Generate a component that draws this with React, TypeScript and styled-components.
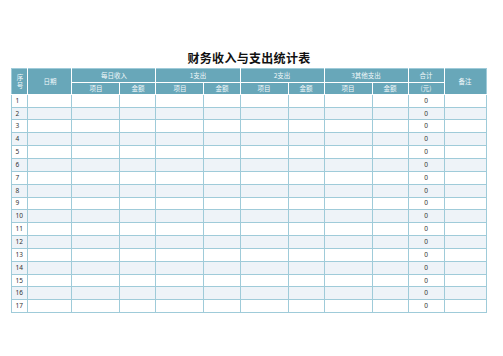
import React from "react";
import styled, { createGlobalStyle } from "styled-components";

const Global = createGlobalStyle`
  html, body { margin: 0; padding: 0; background: #ffffff; }
  body { font-family: "Noto Sans", "Noto Sans CJK SC", sans-serif; }
`;

const Page = styled.div`
  width: 503px;
  height: 356px;
  padding: 52px 0 0 12px;
  box-sizing: border-box;
`;

const Sheet = styled.div`
  width: 474px;
  display: flex;
  flex-direction: column;
  align-items: center;
  gap: 4px;
`;

const Title = styled.h1`
  margin: 0;
  font-family: "Noto Sans CJK SC", sans-serif;
  font-size: 12px;
  line-height: 12px;
  font-weight: 700;
  color: #111;
  letter-spacing: 0.3px;
`;

const Table = styled.table`
  width: 474px;
  table-layout: fixed;
  border-collapse: collapse;
  border: 1px solid #9fcbd9;
`;

const HeadRow = styled.tr<{ $h: number }>`
  height: ${(p) => p.$h}px;
`;

const HeadCell = styled.th`
  background: #68a7b9;
  color: #f2f8fa;
  font-family: "Noto Sans CJK SC", sans-serif;
  font-weight: 400;
  font-size: 6.5px;
  line-height: 8px;
  text-align: center;
  vertical-align: middle;
  padding: 0;
  border: 1px solid #ffffff;
  &:first-child { border-left-color: #9fcbd9; }
  &:last-child { border-right-color: #9fcbd9; }
`;

const HeadTop = styled.tr`
  height: 13.5px;
  & > th { border-top-color: #9fcbd9; }
`;

const SeqHead = styled(HeadCell)`
  padding: 0 4px;
  line-height: 8.5px;
  word-break: break-all;
`;

const BodyRow = styled.tr<{ $striped: boolean }>`
  height: 12.85px;
  background: ${(p) => (p.$striped ? "#eef3f8" : "#ffffff")};
`;

const Cell = styled.td<{ $align?: string }>`
  border: 1px solid #9fcbd9;
  padding: 0 0 0 3px;
  font-family: "Noto Sans", sans-serif;
  font-size: 6.5px;
  line-height: 8px;
  color: #333;
  text-align: ${(p) => p.$align || "left"};
  vertical-align: middle;
`;

const TotalCell = styled(Cell)`
  padding: 0;
  text-align: center;
`;

const widths = [16, 44, 48, 36, 48, 36, 48, 36, 48, 36, 36, 42];

export default function App() {
  const rows = Array.from({ length: 17 }, (_, i) => i + 1);
  return (
    <>
      <Global />
      <Page>
        <Sheet>
          <Title>财务收入与支出统计表</Title>
          <Table>
            <colgroup>
              {widths.map((w, i) => (
                <col key={i} style={{ width: w }} />
              ))}
            </colgroup>
            <thead>
              <HeadTop>
                <SeqHead rowSpan={2}>序号</SeqHead>
                <HeadCell rowSpan={2}>日期</HeadCell>
                <HeadCell colSpan={2}>每日收入</HeadCell>
                <HeadCell colSpan={2}>1支出</HeadCell>
                <HeadCell colSpan={2}>2支出</HeadCell>
                <HeadCell colSpan={2}>3其他支出</HeadCell>
                <HeadCell>合计</HeadCell>
                <HeadCell rowSpan={2}>备注</HeadCell>
              </HeadTop>
              <HeadRow $h={12.3}>
                <HeadCell>项目</HeadCell>
                <HeadCell>金额</HeadCell>
                <HeadCell>项目</HeadCell>
                <HeadCell>金额</HeadCell>
                <HeadCell>项目</HeadCell>
                <HeadCell>金额</HeadCell>
                <HeadCell>项目</HeadCell>
                <HeadCell>金额</HeadCell>
                <HeadCell>(元)</HeadCell>
              </HeadRow>
            </thead>
            <tbody>
              {rows.map((n) => (
                <BodyRow key={n} $striped={n % 2 === 0}>
                  <Cell>{n}</Cell>
                  <Cell />
                  <Cell />
                  <Cell />
                  <Cell />
                  <Cell />
                  <Cell />
                  <Cell />
                  <Cell />
                  <Cell />
                  <TotalCell>0</TotalCell>
                  <Cell />
                </BodyRow>
              ))}
            </tbody>
          </Table>
        </Sheet>
      </Page>
    </>
  );
}
